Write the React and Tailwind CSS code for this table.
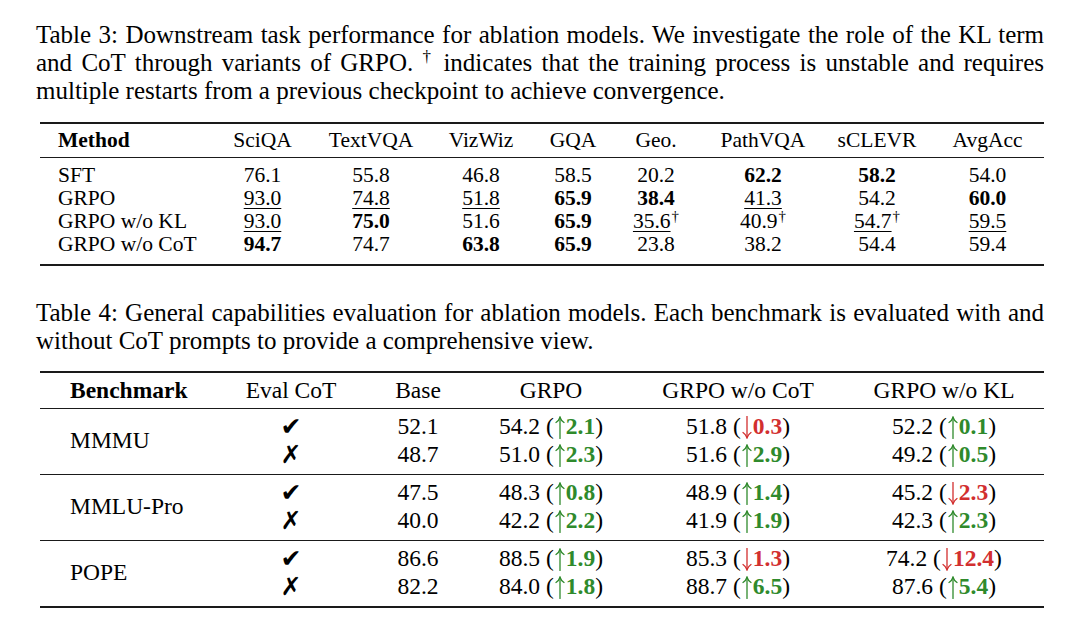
import React from "react";

const serif = { fontFamily: '"Liberation Serif", "Times New Roman", serif' };

const t1Cols = "grid grid-cols-[168px_109px_108px_112px_72px_94px_120px_108px_113px]";

const t1Head = ["SciQA", "TextVQA", "VizWiz", "GQA", "Geo.", "PathVQA", "sCLEVR", "AvgAcc"];

const c = (v, o = {}) => ({ v, ...o });
const t1Rows = [
  ["SFT", [c("76.1"), c("55.8"), c("46.8"), c("58.5"), c("20.2"), c("62.2", { b: 1 }), c("58.2", { b: 1 }), c("54.0")]],
  ["GRPO", [c("93.0", { u: 1 }), c("74.8", { u: 1 }), c("51.8", { u: 1 }), c("65.9", { b: 1 }), c("38.4", { b: 1 }), c("41.3", { u: 1 }), c("54.2"), c("60.0", { b: 1 })]],
  ["GRPO w/o KL", [c("93.0", { u: 1 }), c("75.0", { b: 1 }), c("51.6"), c("65.9", { b: 1 }), c("35.6", { u: 1, d: 1 }), c("40.9", { d: 1 }), c("54.7", { u: 1, d: 1 }), c("59.5", { u: 1 })]],
  ["GRPO w/o CoT", [c("94.7", { b: 1 }), c("74.7"), c("63.8", { b: 1 }), c("65.9", { b: 1 }), c("23.8"), c("38.2"), c("54.4"), c("59.4")]],
];

function Dagger({ cls }) {
  return <span className={"relative align-top " + cls} style={serif}>†</span>;
}

function Cell({ cell }) {
  return (
    <div className="text-center">
      <span className={(cell.b ? "font-bold " : "") + (cell.u ? "underline decoration-1 underline-offset-[3px]" : "")}>{cell.v}</span>
      {cell.d ? <Dagger cls="text-[15px] leading-[15px] -top-[1px] ml-[1px]" /> : null}
    </div>
  );
}

const t2Cols = "grid grid-cols-[190px_122px_132px_134px_240px_172px_14px]";

const t2Data = [
  ["MMMU", [
    ["✔", "52.1", ["54.2", 1, "2.1"], ["51.8", 0, "0.3"], ["52.2", 1, "0.1"]],
    ["✗", "48.7", ["51.0", 1, "2.3"], ["51.6", 1, "2.9"], ["49.2", 1, "0.5"]],
  ]],
  ["MMLU-Pro", [
    ["✔", "47.5", ["48.3", 1, "0.8"], ["48.9", 1, "1.4"], ["45.2", 0, "2.3"]],
    ["✗", "40.0", ["42.2", 1, "2.2"], ["41.9", 1, "1.9"], ["42.3", 1, "2.3"]],
  ]],
  ["POPE", [
    ["✔", "86.6", ["88.5", 1, "1.9"], ["85.3", 0, "1.3"], ["74.2", 0, "12.4"]],
    ["✗", "82.2", ["84.0", 1, "1.8"], ["88.7", 1, "6.5"], ["87.6", 1, "5.4"]],
  ]],
];

function Arrow({ up }) {
  return (
    <svg
      width="10"
      height="23"
      viewBox="0 0 10 23"
      className="inline-block align-[-5px] mx-[1px]"
      fill="none"
      stroke="currentColor"
      strokeWidth="1.3"
      strokeLinecap="round"
    >
      {up ? (
        <>
          <path d="M5 22.5 V1.5" />
          <path d="M1 6.5 Q4 4.5 5 1.2 Q6 4.5 9 6.5" />
        </>
      ) : (
        <>
          <path d="M5 0.5 V21.5" />
          <path d="M1 16.5 Q4 18.5 5 21.8 Q6 18.5 9 16.5" />
        </>
      )}
    </svg>
  );
}

function Delta({ d }) {
  const [v, up, n] = d;
  return (
    <div className="text-center whitespace-nowrap">
      {v} (
      {up ? (
        <span className="text-[#2f8a2c]"><Arrow up /><b>{n}</b></span>
      ) : (
        <span className="text-[#d22f2f]"><Arrow /><b>{n}</b></span>
      )}
      )
    </div>
  );
}

export default function App() {
  return (
    <div className="min-h-[631px] w-[1080px] bg-white text-black" style={serif}>
      <div className="pl-[36px] w-[1044px] pt-[21px]">
        <div className="text-[25px] leading-[28px]">
          <div className="text-justify [text-align-last:justify]">Table 3: Downstream task performance for ablation models. We investigate the role of the KL term</div>
          <div className="text-justify [text-align-last:justify]">and CoT through variants of GRPO. <Dagger cls="text-[17px] leading-[17px] -top-[1px]" /> indicates that the training process is unstable and requires</div>
          <div>multiple restarts from a previous checkpoint to achieve convergence.</div>
        </div>

        <div className="ml-[4px] w-[1004px] mt-[17px] text-[21.5px] leading-[23px]">
          <div className="h-[2px] bg-[#1a1a1a]" />
          <div className={t1Cols + " py-[5px]"}>
            <div className="pl-[18px] font-bold">Method</div>
            {t1Head.map((h) => (
              <div key={h} className="text-center">{h}</div>
            ))}
          </div>
          <div className="h-px bg-[#1a1a1a]" />
          <div className="pt-[6px] pb-[8px]">
            {t1Rows.map(([name, cells]) => (
              <div key={name} className={t1Cols}>
                <div className="pl-[18px]">{name}</div>
                {cells.map((cell, i) => (
                  <Cell key={i} cell={cell} />
                ))}
              </div>
            ))}
          </div>
          <div className="h-[2px] bg-[#1a1a1a]" />
        </div>

        <div className="mt-[33px] text-[25px] leading-[28px]">
          <div className="text-justify [text-align-last:justify]">Table 4: General capabilities evaluation for ablation models. Each benchmark is evaluated with and</div>
          <div>without CoT prompts to provide a comprehensive view.</div>
        </div>

        <div className="ml-[4px] w-[1004px] mt-[16px] text-[23.5px] leading-[27.5px]">
          <div className="h-[2px] bg-[#1a1a1a]" />
          <div className={t2Cols + " h-[35px] items-center"}>
            <div className="pl-[30px] font-bold">Benchmark</div>
            <div className="text-center">Eval CoT</div>
            <div className="text-center">Base</div>
            <div className="text-center">GRPO</div>
            <div className="text-center">GRPO w/o CoT</div>
            <div className="text-center">GRPO w/o KL</div>
            <div />
          </div>
          {t2Data.map(([name, rows]) => (
            <div key={name}>
              <div className="h-px bg-[#1a1a1a]" />
              <div className="flex pt-[4px] pb-[6px]">
                <div className="w-[190px] pl-[30px] flex items-center">{name}</div>
                <div className="flex-1">
                  {rows.map((r, i) => (
                    <div key={i} className="grid grid-cols-[122px_132px_134px_240px_172px_14px] h-[27.5px] items-center">
                      <div className="text-center text-[25px] leading-[27px] font-bold" style={{ fontFamily: '"DejaVu Sans", sans-serif' }}>{r[0]}</div>
                      <div className="text-center">{r[1]}</div>
                      <Delta d={r[2]} />
                      <Delta d={r[3]} />
                      <Delta d={r[4]} />
                      <div />
                    </div>
                  ))}
                </div>
              </div>
            </div>
          ))}
          <div className="h-[2px] bg-[#1a1a1a]" />
        </div>
      </div>
    </div>
  );
}
